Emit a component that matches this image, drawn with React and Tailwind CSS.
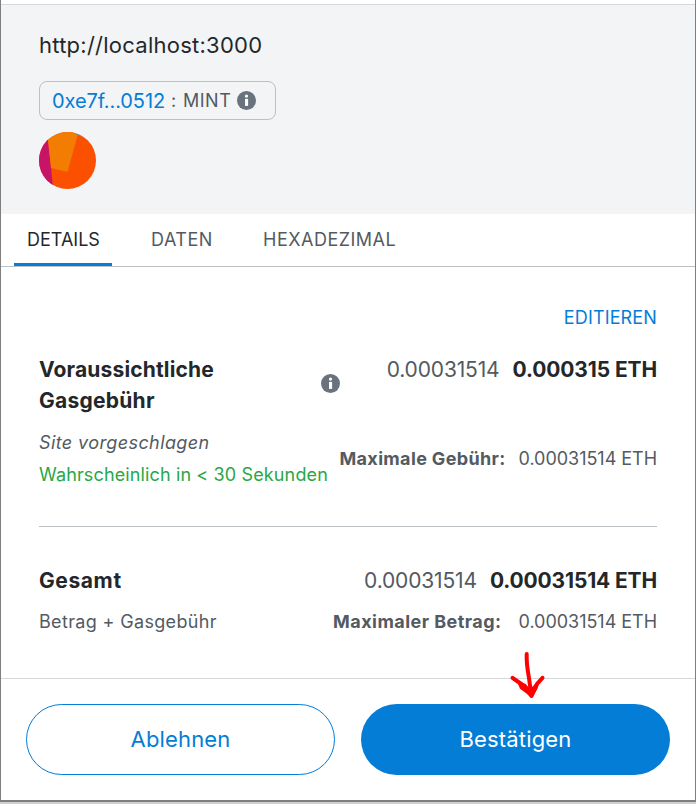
import React from "react";

function InfoIcon({ className = "" }) {
  return (
    <svg viewBox="0 0 19 19" className={`block h-[19px] w-[19px] shrink-0 ${className}`}>
      <circle cx="9.5" cy="9.5" r="9.5" fill="#6a737d" />
      <circle cx="9.5" cy="5.1" r="1.6" fill="#fff" />
      <rect x="8" y="7.9" width="3.1" height="7" fill="#fff" />
    </svg>
  );
}

function Avatar() {
  return (
    <svg viewBox="0 0 57 57" className="mt-3 block h-[57px] w-[57px]">
      <defs>
        <clipPath id="avatar">
          <circle cx="28.5" cy="28.5" r="28.5" />
        </clipPath>
      </defs>
      <g clipPath="url(#avatar)">
        <rect width="57" height="57" fill="#fb5000" />
        <path d="M0 0H8.5L9 8L14.3 57H0Z" fill="#c81466" />
        <path d="M8 0H39.5L28.5 40L12 36L9 8Z" fill="#f37c02" />
        <path d="M39.3 0H57V8L46 4.5L38.4 3.2Z" fill="#18a5d6" />
      </g>
    </svg>
  );
}

function Arrow() {
  return (
    <svg
      viewBox="0 0 40 52"
      className="absolute left-[508px] top-[649px] h-[52px] w-[40px]"
      fill="none"
      stroke="#fe0000"
      strokeLinecap="round"
      strokeLinejoin="round"
    >
      <path d="M18.7 5C18.3 15 19.6 21 21 29L23 44" strokeWidth="4" />
      <path d="M4.5 28.8L14 35.5L23.5 47L29 35L34.5 28.8" strokeWidth="4" />
      <path d="M11 34L17 36L21.5 41L26 38L30 33L28.5 39L24 47L13 39Z" strokeWidth="2.4" fill="#fe0000" />
    </svg>
  );
}

export default function App() {
  return (
    <div className="relative flex h-[804px] w-[696px] flex-col overflow-hidden bg-[#d0d0d0] font-['Inter','Liberation_Sans',sans-serif] text-[18px] text-[#535a61]">
      <div className="flex h-[802px] flex-col border-x border-b-2 border-[#7f7f7f] bg-white">
        <header className="mt-1 h-[210px] border-t border-[#d6d9dc] bg-[#f2f4f6] pl-[38px] pt-[25px]">
          <div className="h-[30px] whitespace-nowrap text-[22px] leading-[30px] tracking-[0.25px] text-[#24272a]">
            http://localhost:3000
          </div>
          <div className="mt-[21px] flex h-[39px] w-[237px] items-center whitespace-nowrap rounded-lg border border-[#bbc0c5] pl-[12px]">
            <span className="w-[113px] text-[20px] tracking-[-0.1px] text-[#037dd6]">0xe7f...0512</span>
            <span className="ml-1.5 w-3">:</span>
            <span className="w-[49px] tracking-[0.5px]">MINT</span>
            <InfoIcon className="ml-[5px]" />
          </div>
          <Avatar />
        </header>

        <nav className="flex h-[53px] shrink-0 whitespace-nowrap border-b border-[#bbc0c5] pl-[13px] leading-[52px]">
          <div className="w-[98px] border-b-[3px] border-[#037dd6] pl-[13px] text-[#24272a]">DETAILS</div>
          <div className="ml-[39px] w-[100px] tracking-[0.5px]">DATEN</div>
          <div className="ml-[12px] tracking-[0.5px]">HEXADEZIMAL</div>
        </nav>

        <main className="h-[411px] shrink-0 px-[38px] pt-[37px]">
          <div className="text-right leading-[28px] tracking-[0.14px] text-[#037dd6]">EDITIEREN</div>

          <section className="mt-[22px] flex h-[173px] justify-between whitespace-nowrap border-b border-[#bbc0c5]">
            <div className="w-[301px] shrink-0">
              <div className="flex items-center justify-between">
                <h2 className="text-[21px] font-bold leading-[31px] tracking-[0.15px] text-[#24272a]">
                  Voraussichtliche
                  <br />
                  <span className="tracking-[0.25px]">Gasgebühr</span>
                </h2>
                <InfoIcon className="-mt-1" />
              </div>
              <div className="mt-[11px] leading-[32px] tracking-[0.4px] italic">Site vorgeschlagen</div>
              <div className="leading-[32px] tracking-[0.13px] text-[#28a745]">Wahrscheinlich in &lt; 30 Sekunden</div>
            </div>
            <div className="flex w-[317px] flex-col items-end">
              <div className="flex text-[21px] leading-[31px]">
                <span className="mr-[13px] tracking-[-0.15px]">0.00031514</span>
                <span className="font-bold tracking-[-0.12px] text-[#24272a]">0.000315 ETH</span>
              </div>
              <div className="mt-[58px] flex leading-[32px]">
                <span className="mr-[13px] font-bold tracking-[0.34px]">Maximale Gebühr:</span>
                <span className="tracking-[-0.03px]">0.00031514 ETH</span>
              </div>
            </div>
          </section>

          <section className="flex justify-between whitespace-nowrap pt-[38px]">
            <div>
              <h2 className="text-[21px] font-bold leading-[31px] tracking-[0.6px] text-[#24272a]">Gesamt</h2>
              <div className="mt-[10px] leading-[32px] tracking-[0.34px]">Betrag + Gasgebühr</div>
            </div>
            <div className="flex flex-col items-end">
              <div className="flex text-[21px] leading-[31px]">
                <span className="mr-[13px] tracking-[-0.15px]">0.00031514</span>
                <span className="font-bold tracking-[-0.15px] text-[#24272a]">0.00031514 ETH</span>
              </div>
              <div className="mt-[10px] flex leading-[32px]">
                <span className="mr-[17px] font-bold tracking-[0.45px]">Maximaler Betrag:</span>
                <span className="tracking-[-0.03px]">0.00031514 ETH</span>
              </div>
            </div>
          </section>
        </main>

        <footer className="flex grow gap-[26px] border-t border-[#d6d9dc] px-[25px] pt-[25px] text-[22px]">
          <button className="h-[71px] w-[309px] rounded-full border border-[#037dd6] bg-white tracking-[0.15px] text-[#037dd6]">
            Ablehnen
          </button>
          <button className="h-[71px] w-[309px] rounded-full bg-[#037dd6] tracking-[0.15px] text-white">
            Bestätigen
          </button>
        </footer>
      </div>
      <Arrow />
    </div>
  );
}
